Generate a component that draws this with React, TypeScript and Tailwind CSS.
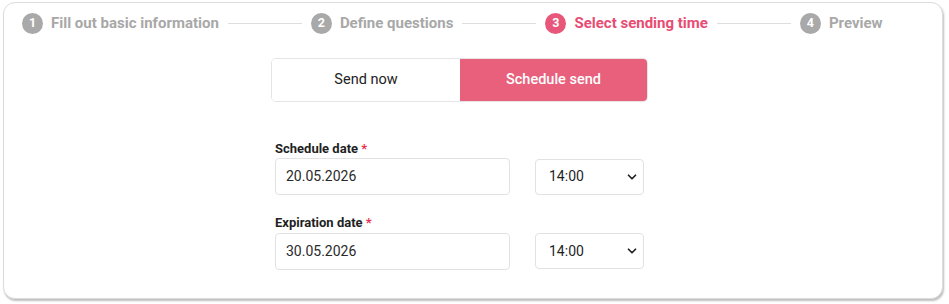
import { ChevronDown } from 'lucide-react';

const steps = [
  { n: 1, label: 'Fill out basic information', active: false },
  { n: 2, label: 'Define questions', active: false },
  { n: 3, label: 'Select sending time', active: true },
  { n: 4, label: 'Preview', active: false },
];

function Step({ n, label, active }: { n: number; label: string; active: boolean }) {
  return (
    <div className="flex items-center gap-[8px]">
      <span
        className={`flex h-[21px] w-[21px] items-center justify-center rounded-full text-[12.5px] font-bold text-white ${
          active ? 'bg-[#e8577a]' : 'bg-[#a9a9a9]'
        }`}
      >
        {n}
      </span>
      <span
        className={`text-[15px] font-bold ${active ? 'text-[#e84c73]' : 'text-[#a8a8a8]'}`}
      >
        {label}
      </span>
    </div>
  );
}

function DateRow({ label, date }: { label: string; date: string }) {
  return (
    <div className="flex flex-col">
      <label className="mb-0 text-[13px] font-bold text-[#1f1f1f]">
        {label} <span className="text-[#e8304f]">*</span>
      </label>
      <div className="flex items-center gap-[25px]">
        <div className="flex h-[37px] w-[235px] items-center rounded-[4px] border border-[#e2e2e2] px-[10px] text-[14px] text-[#2a2a2a]">
          {date}
        </div>
        <div className="flex h-[36px] w-[109px] items-center justify-between rounded-[4px] border border-[#e2e2e2] pl-[13px] pr-[4px] text-[14px] text-[#1f1f1f]">
          <span>14:00</span>
          <ChevronDown size={14} strokeWidth={3} className="text-[#222]" />
        </div>
      </div>
    </div>
  );
}

export default function App() {
  return (
    <div
      className="h-[304px] w-[949px] bg-white pl-[3px] pt-[2px]"
      style={{ fontFamily: 'Roboto, "Liberation Sans", sans-serif' }}
    >
      <div className="h-[297px] w-[940px] rounded-[12px] border border-[#dcdcdc] bg-white shadow-[1px_2px_2px_rgba(0,0,0,0.25)]">
        <div className="flex items-center pl-[18px] pt-[9px]">
          {steps.map((s, i) => (
            <div key={s.n} className="flex items-center">
              <Step {...s} />
              {i < steps.length - 1 && <div className="mx-[9px] h-px w-[74px] bg-[#dedede]" />}
            </div>
          ))}
        </div>

        <div className="ml-[267px] mt-[23px] w-[377px]">
          <div className="flex h-[44px] overflow-hidden rounded-[5px] border border-[#e4e4e4] text-[14.5px]">
            <div className="flex w-[188px] items-center justify-center bg-white text-[#222]">
              Send now
            </div>
            <div className="flex flex-1 items-center justify-center bg-[#e8607c] font-medium text-white">
              Schedule send
            </div>
          </div>

          <div className="ml-[4px] mt-[37px] flex flex-col gap-[18px]">
            <DateRow label="Schedule date" date="20.05.2026" />
            <DateRow label="Expiration date" date="30.05.2026" />
          </div>
        </div>
      </div>
    </div>
  );
}
